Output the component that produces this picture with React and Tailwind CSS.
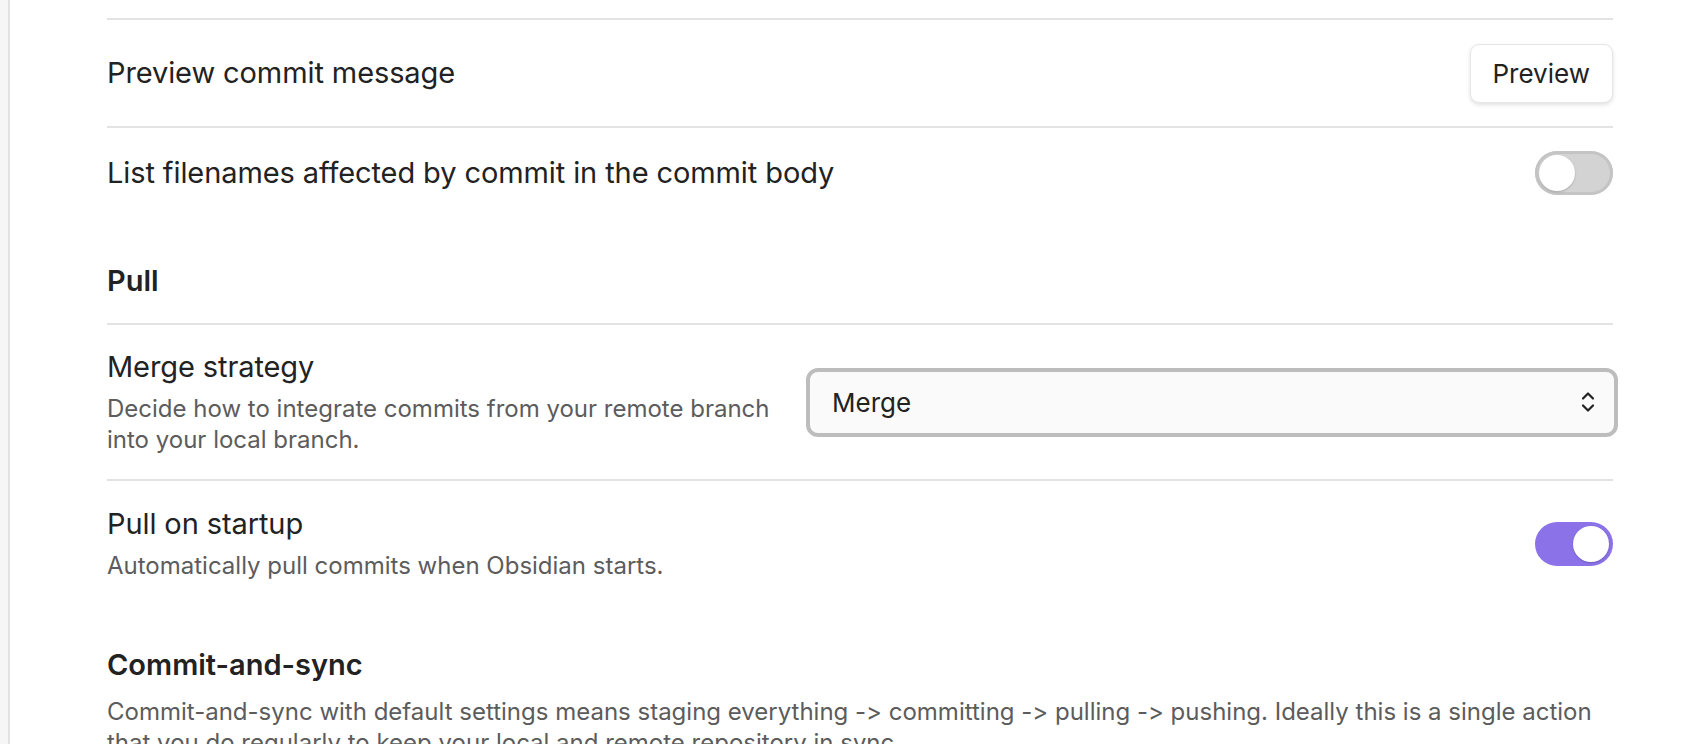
import React from "react";

function Toggle({ on }) {
  return (
    <div
      className={
        "relative w-[78px] h-[44px] rounded-full shrink-0 " +
        (on
          ? "bg-[#8c72e8]"
          : "bg-[#d3d3d3] shadow-[inset_0_0_0_3px_#c4c4c4]")
      }
    >
      <div
        className={
          "absolute top-[4px] w-[36px] h-[36px] rounded-full bg-white shadow-[0_1px_2px_rgba(0,0,0,0.2)] " +
          (on ? "right-[4px]" : "left-[4px]")
        }
      />
    </div>
  );
}

function Chevrons() {
  return (
    <svg width="16" height="26" viewBox="0 0 16 26" fill="none" stroke="#222" strokeWidth="2.2" strokeLinecap="round" strokeLinejoin="round">
      <path d="M3 9.5 L8 4.5 L13 9.5" />
      <path d="M3 16.5 L8 21.5 L13 16.5" />
    </svg>
  );
}

export default function App() {
  return (
    <div
      className="flex w-full h-[744px] overflow-hidden bg-white text-[#222] [font-feature-settings:'calt'_0]"
      style={{ fontFamily: "Inter, 'Noto Sans', sans-serif" }}
    >
      <div className="w-[10px] shrink-0 bg-[#f6f6f6] border-r-2 border-[#e2e2e2]" />
      <div className="flex-1 pl-[97px] pr-[95px] pt-[18px]">
        <div className="border-t-2 border-[#e3e3e3] flex items-center justify-between h-[108px]">
          <div className="text-[29px] leading-[36px] tracking-[-0.1px]">Preview commit message</div>
          <button className="h-[59px] px-[22px] rounded-[9px] bg-white text-[26px] text-[#222] border border-[#e6e6e6] shadow-[0_2px_4px_rgba(0,0,0,0.12)]">
            Preview
          </button>
        </div>
        <div className="border-t-2 border-[#e3e3e3] flex items-center justify-between h-[92px]">
          <div className="text-[29px] leading-[36px] tracking-[-0.1px]">List filenames affected by commit in the commit body</div>
          <Toggle on={false} />
        </div>
        <div className="pt-[45px] pb-[24px] text-[29px] leading-[36px] font-semibold">Pull</div>
        <div className="border-t-2 border-[#e3e3e3] flex items-center justify-between pt-[24px] pb-[24px] gap-[30px]">
          <div className="flex flex-col">
            <div className="text-[29px] leading-[36px] tracking-[-0.1px]">Merge strategy</div>
            <div className="mt-[8px] text-[24px] leading-[31px] text-[#5c5c5c] whitespace-nowrap">
              Decide how to integrate commits from your remote branch
              <br />
              into your local branch.
            </div>
          </div>
          <div className="w-[812px] h-[69px] -mr-[5px] shrink-0 rounded-[12px] border-[4px] border-[#bdbdbd] bg-[#fafafa] flex items-center justify-between pl-[22px] pr-[18px]">
            <span className="text-[26px]">Merge</span>
            <Chevrons />
          </div>
        </div>
        <div className="border-t-2 border-[#e3e3e3] flex items-center justify-between pt-[25px] pb-[23px]">
          <div className="flex flex-col">
            <div className="text-[29px] leading-[36px] tracking-[-0.1px]">Pull on startup</div>
            <div className="mt-[8px] text-[24px] leading-[31px] text-[#5c5c5c]">
              Automatically pull commits when Obsidian starts.
            </div>
          </div>
          <Toggle on={true} />
        </div>
        <div className="pt-[43px]">
          <div className="text-[29px] leading-[36px] font-semibold">Commit-and-sync</div>
          <div className="mt-[13px] text-[24px] leading-[31px] text-[#5c5c5c] whitespace-nowrap">
            Commit-and-sync with default settings means staging everything -&gt; committing -&gt; pulling -&gt; pushing. Ideally this is a single action
            <br />
            that you do regularly to keep your local and remote repository in sync.
          </div>
        </div>
      </div>
    </div>
  );
}
